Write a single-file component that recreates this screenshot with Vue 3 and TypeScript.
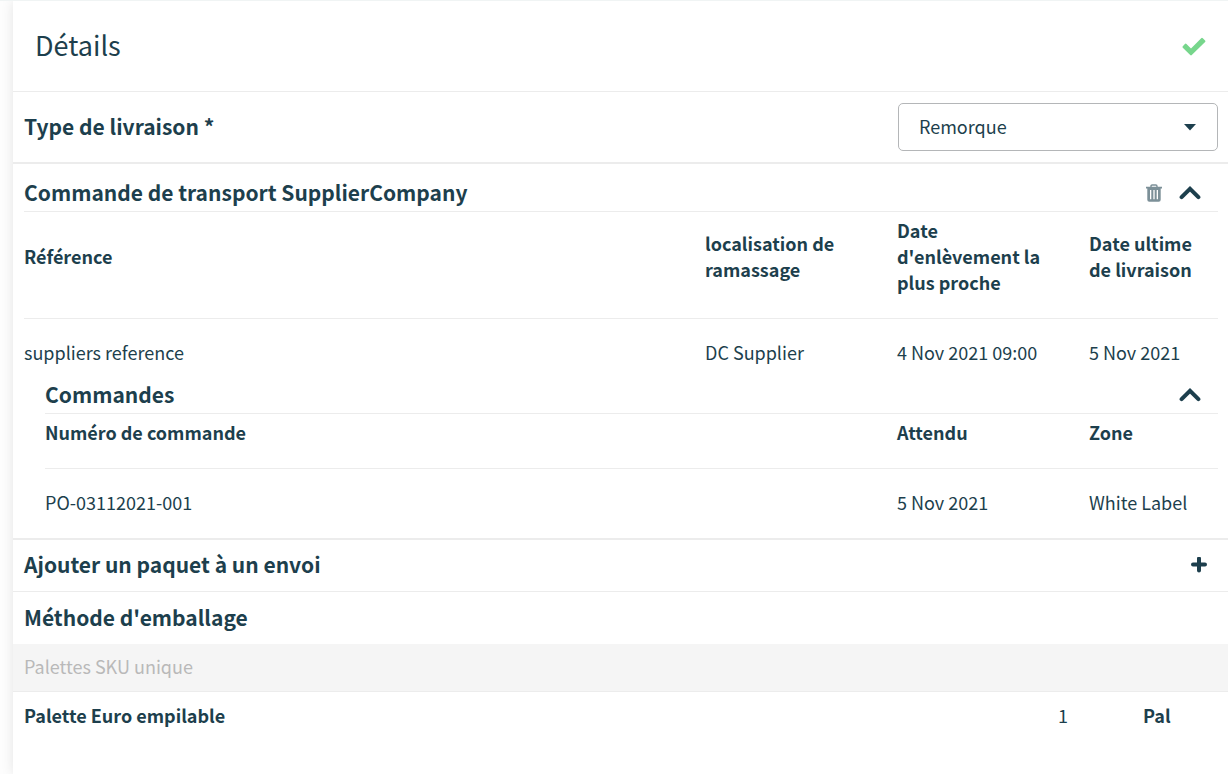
<script setup lang="ts">
import { ref } from 'vue'

interface TransportOrder {
  reference: string
  pickup: string
  earliest: string
  latest: string
}

interface PurchaseOrder {
  number: string
  expected: string
  zone: string
}

interface PackageLine {
  name: string
  quantity: number
  unit: string
}

const deliveryType = ref('Remorque')
const transportOpen = ref(true)
const ordersOpen = ref(true)

const transportOrders: TransportOrder[] = [
  { reference: 'suppliers reference', pickup: 'DC Supplier', earliest: '4 Nov 2021 09:00', latest: '5 Nov 2021' },
]
const purchaseOrders: PurchaseOrder[] = [
  { number: 'PO-03112021-001', expected: '5 Nov 2021', zone: 'White Label' },
]
const packageLines: PackageLine[] = [{ name: 'Palette Euro empilable', quantity: 1, unit: 'Pal' }]
</script>

<template>
  <div class="page">
    <main class="card">
      <header class="card-header">
        <h1>Détails</h1>
        <svg class="check" viewBox="0 0 24 20" aria-hidden="true">
          <path
            d="M.8 10.200 2.900 8q.8-.8 1.600 0L9 12.400 19.200 2.200q.8-.8 1.600 0l2.300 2.300q.8.8 0 1.600L9.800 19.100q-.8.700-1.600 0L.8 11.800q-.8-.8 0-1.600z"
          />
        </svg>
      </header>

      <div class="row delivery">
        <label class="heading" for="delivery-type">Type de livraison *</label>
        <div class="select">
          <select id="delivery-type" v-model="deliveryType">
            <option>Remorque</option>
          </select>
          <svg viewBox="0 0 12 7" aria-hidden="true"><path d="M0 0h12L6 6.6z" /></svg>
        </div>
      </div>

      <section class="transport">
        <div class="section-title">
          <h2 class="heading">Commande de transport SupplierCompany</h2>
          <button type="button" class="icon-button" aria-label="Supprimer">
            <svg class="trash" viewBox="0 0 16 18" aria-hidden="true">
              <path class="trash-line" d="M5 3.400V2.200Q5 1 6.200 1h3.600Q11 1 11 2.200v1.200" />
              <path
                fill-rule="evenodd"
                d="M0 2.800h16v1.800h-1.300v11.200q0 2-2 2H3.300q-2 0-2-2V4.600H0zM4 6v9.300h1.300V6zm3.350 0v9.300h1.300V6zm3.350 0v9.300H12V6z"
              />
            </svg>
          </button>
          <button
            type="button"
            class="icon-button"
            aria-label="Replier la commande de transport"
            :aria-expanded="transportOpen"
            @click="transportOpen = !transportOpen"
          >
            <svg class="chevron" :class="{ closed: !transportOpen }" viewBox="0 0 22 16" aria-hidden="true">
              <path d="M2.600 12.200 11 3.800l8.400 8.400" />
            </svg>
          </button>
        </div>

        <template v-if="transportOpen">
          <table>
            <colgroup>
              <col />
              <col class="col-wide" />
              <col class="col-wide" />
              <col class="col-last" />
            </colgroup>
            <thead>
              <tr>
                <th scope="col">Référence</th>
                <th scope="col">localisation de ramassage</th>
                <th scope="col">Date d'enlèvement la plus proche</th>
                <th scope="col">Date ultime de livraison</th>
              </tr>
            </thead>
            <tbody>
              <tr v-for="order in transportOrders" :key="order.reference">
                <td>{{ order.reference }}</td>
                <td>{{ order.pickup }}</td>
                <td>{{ order.earliest }}</td>
                <td>{{ order.latest }}</td>
              </tr>
            </tbody>
          </table>

          <section class="orders">
            <div class="section-title">
              <h3 class="heading">Commandes</h3>
              <button
                type="button"
                class="icon-button"
                aria-label="Replier les commandes"
                :aria-expanded="ordersOpen"
                @click="ordersOpen = !ordersOpen"
              >
                <svg class="chevron" :class="{ closed: !ordersOpen }" viewBox="0 0 22 16" aria-hidden="true">
                  <path d="M2.600 12.200 11 3.800l8.400 8.400" />
                </svg>
              </button>
            </div>
            <table v-if="ordersOpen">
              <colgroup>
                <col />
                <col class="col-wide" />
                <col class="col-last" />
              </colgroup>
              <thead>
                <tr>
                  <th scope="col">Numéro de commande</th>
                  <th scope="col">Attendu</th>
                  <th scope="col">Zone</th>
                </tr>
              </thead>
              <tbody>
                <tr v-for="order in purchaseOrders" :key="order.number">
                  <td>{{ order.number }}</td>
                  <td>{{ order.expected }}</td>
                  <td>{{ order.zone }}</td>
                </tr>
              </tbody>
            </table>
          </section>
        </template>
      </section>

      <div class="row add-package">
        <h2 class="heading">Ajouter un paquet à un envoi</h2>
        <button type="button" class="icon-button" aria-label="Ajouter un paquet">
          <svg class="plus" viewBox="0 0 16 16" aria-hidden="true"><path d="M8 1.500v12M2 7.500h12" /></svg>
        </button>
      </div>

      <section>
        <div class="row packing-title">
          <h2 class="heading">Méthode d'emballage</h2>
        </div>
        <p class="group">Palettes SKU unique</p>
        <ul>
          <li v-for="line in packageLines" :key="line.name">
            <strong class="name">{{ line.name }}</strong>
            <span class="quantity">{{ line.quantity }}</span>
            <strong class="unit">{{ line.unit }}</strong>
          </li>
        </ul>
      </section>
    </main>
  </div>
</template>

<style>
body {
  margin: 0;
  background: #fdfdfd;
}
</style>

<style scoped>
.page {
  box-sizing: border-box;
  min-height: 100vh;
  display: flex;
  padding-left: 13px;
  border-top: 1px solid #f0f4f4;
  overflow: hidden;
  color: #1d3f4d;
  font-family: 'Noto Sans CJK SC', 'Noto Sans', sans-serif;
  font-size: 18px;
  line-height: 26px;
}

.card {
  flex: 1;
  min-width: 0;
  background: #fff;
  box-shadow: 0 0 12px rgba(0, 0, 0, 0.1);
}

h1,
h2,
h3,
p,
ul {
  margin: 0;
  padding: 0;
}

.card-header {
  display: flex;
  align-items: center;
  justify-content: space-between;
  height: 90px;
  padding: 0 22px;
  border-bottom: 1px solid #ececec;
}

h1 {
  padding-bottom: 2px;
  font-size: 27px;
  font-weight: 400;
  line-height: 40px;
}

.heading {
  flex: 1;
  padding-bottom: 2px;
  font-size: 21px;
  font-weight: 700;
  line-height: 28px;
}

.row {
  display: flex;
  align-items: center;
  padding: 11px 10px 11px 11px;
}

.delivery {
  border-bottom: 2px solid #ececec;
}

.select {
  position: relative;
  width: 320px;
}

select {
  box-sizing: border-box;
  width: 100%;
  height: 48px;
  padding: 0 48px 2px 20px;
  border: 1px solid #b4b6b8;
  border-radius: 5px;
  appearance: none;
  background: #fff;
  color: inherit;
  font: inherit;
}

.select svg {
  position: absolute;
  top: 21px;
  right: 22px;
  width: 12px;
  height: 7px;
  fill: #1d3f4d;
  pointer-events: none;
}

.transport {
  padding: 11px 10px 11px 11px;
  border-bottom: 2px solid #ececec;
}

.section-title {
  display: flex;
  align-items: center;
  gap: 17px;
  height: 36px;
  padding-right: 17px;
  border-bottom: 1px solid #ececec;
}

.icon-button {
  display: flex;
  padding: 0;
  border: 0;
  background: none;
  color: inherit;
  cursor: pointer;
}

.orders {
  padding-left: 21px;
}

table {
  width: 100%;
  table-layout: fixed;
  border-spacing: 0;
}

.col-wide {
  width: 192px;
}

.col-last {
  width: 129px;
}

th,
td {
  padding: 0;
  text-align: left;
}

th {
  padding: 5px 32px 23px 0;
  border-bottom: 1px solid #ececec;
  font-weight: 700;
}

th:last-child {
  padding-right: 16px;
}

td {
  padding: 20px 0 12px;
  white-space: nowrap;
}

.add-package {
  padding: 10px 21px 11px 11px;
  border-bottom: 1px solid #ececec;
}

.group {
  padding: 9px 11px 12px;
  border-bottom: 1px solid #ececec;
  background: #f5f5f5;
  color: #b9b9b9;
}

li {
  display: flex;
  padding: 10px 0 12px 11px;
}

.name {
  flex: 1;
}

.quantity,
.unit {
  width: 85px;
}

.check {
  width: 24px;
  height: 20px;
  fill: #77d68c;
}

.trash {
  width: 16px;
  height: 18px;
  fill: #7c9098;
}

.trash-line {
  fill: none;
  stroke: #7c9098;
  stroke-width: 1.4;
}

.chevron {
  width: 22px;
  height: 16px;
  fill: none;
  stroke: #1d3f4d;
  stroke-width: 4;
  stroke-linecap: round;
}

.chevron.closed {
  transform: rotate(180deg);
}

.plus {
  width: 16px;
  height: 16px;
  fill: none;
  stroke: #1d3f4d;
  stroke-width: 4;
  stroke-linecap: round;
}
</style>
